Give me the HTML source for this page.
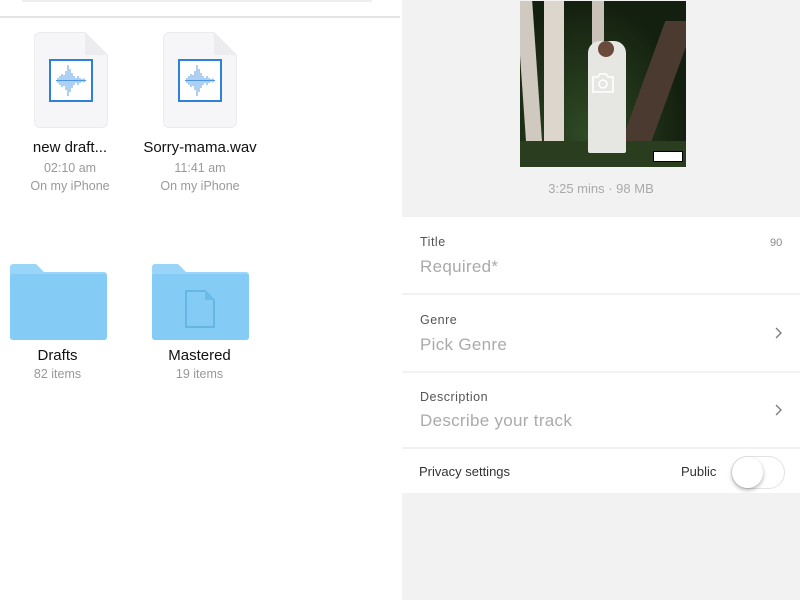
<!DOCTYPE html>
<html><head><meta charset="utf-8"><style>
*{margin:0;padding:0;box-sizing:border-box}
body{width:800px;height:600px;overflow:hidden;background:#fff;font-family:"Liberation Sans",sans-serif;position:relative}
.abs{position:absolute}
.left{left:0;top:0;width:402px;height:600px;background:#fff}
.topbar{left:22px;top:0;width:350px;height:2px;background:#eee}
.div{left:0;top:16px;width:400px;height:2px;background:#e4e4e4}
.doc{width:74px;height:96px;background:#f6f6f8;border:1px solid #ebebed;border-radius:6px}
.name{font-size:15px;color:#111;text-align:center}
.sub{font-size:12.5px;color:#999;text-align:center}
.right{left:402px;top:0;width:398px;height:600px;background:#f2f2f2}
.row{left:402px;width:398px;background:#fff}
.lbl{font-size:12.5px;color:#555;letter-spacing:.5px}
.ph{font-size:17px;color:#aaa;letter-spacing:.3px}
</style></head><body>
<div class="abs left"></div>
<div class="abs topbar"></div>
<div class="abs div"></div>

<div class="abs doc" style="left:34px;top:32px"></div>
<div class="abs" style="left:85px;top:32px;width:23px;height:23px;background:linear-gradient(225deg,#fff 50%,#ececee 50%)"></div>
<svg class="abs" style="left:49px;top:59px" width="44" height="43" viewBox="0 0 44 43"><rect x="1" y="1" width="42" height="41" fill="#fff" stroke="#2f7fdc" stroke-width="2"/><g stroke="#4c96e2" stroke-width="0.9"><path d="M7 21.5h30M9 19v5M11 17v9M13 15v13M15 16v11M17 12v19M19 6v31M21 10v23M23 14v15M25 17v9M27 19v5M29 17v9M31 19v5M33 20v3M35 19.5v4"/></g></svg>
<div class="abs name" style="left:10px;top:139px;width:120px">new draft...</div>
<div class="abs sub" style="left:10px;top:161px;width:120px">02:10 am</div>
<div class="abs sub" style="left:10px;top:179px;width:120px">On my iPhone</div>

<div class="abs doc" style="left:163px;top:32px"></div>
<div class="abs" style="left:214px;top:32px;width:23px;height:23px;background:linear-gradient(225deg,#fff 50%,#ececee 50%)"></div>
<svg class="abs" style="left:178px;top:59px" width="44" height="43" viewBox="0 0 44 43"><rect x="1" y="1" width="42" height="41" fill="#fff" stroke="#2f7fdc" stroke-width="2"/><g stroke="#4c96e2" stroke-width="0.9"><path d="M7 21.5h30M9 19v5M11 17v9M13 15v13M15 16v11M17 12v19M19 6v31M21 10v23M23 14v15M25 17v9M27 19v5M29 17v9M31 19v5M33 20v3M35 19.5v4"/></g></svg>
<div class="abs name" style="left:130px;top:139px;width:140px">Sorry-mama.wav</div>
<div class="abs sub" style="left:130px;top:161px;width:140px">11:41 am</div>
<div class="abs sub" style="left:130px;top:179px;width:140px">On my iPhone</div>

<svg class="abs" style="left:10px;top:264px" width="97" height="76" viewBox="0 0 97 76"><path d="M3 0h23l8 8h60a3 3 0 0 1 3 3v62a3 3 0 0 1-3 3H3a3 3 0 0 1-3-3V3a3 3 0 0 1 3-3z" fill="#98d5f9"/><rect x="0" y="10" width="97" height="66" rx="3" fill="#84cbf5"/></svg>
<div class="abs name" style="left:0;top:347px;width:115px">Drafts</div>
<div class="abs sub" style="left:0;top:367px;width:115px">82 items</div>
<svg class="abs" style="left:152px;top:264px" width="97" height="76" viewBox="0 0 97 76"><path d="M3 0h23l8 8h60a3 3 0 0 1 3 3v62a3 3 0 0 1-3 3H3a3 3 0 0 1-3-3V3a3 3 0 0 1 3-3z" fill="#98d5f9"/><rect x="0" y="10" width="97" height="66" rx="3" fill="#84cbf5"/><path d="M34 27h19l9 9v27H34z" fill="none" stroke="#5cb0e0" stroke-width="1.5"/><path d="M53 27v9h9" fill="#6cbbe8"/></svg>
<div class="abs name" style="left:142px;top:347px;width:115px">Mastered</div>
<div class="abs sub" style="left:142px;top:367px;width:115px">19 items</div>

<div class="abs right"></div>
<div class="abs" style="left:520px;top:1px;width:166px;height:166px;background:#1d2a1c;overflow:hidden">
 <div class="abs" style="left:0;top:0;width:166px;height:166px;background:radial-gradient(ellipse at 40% 80%,#2f4a25,#14200f 70%)"></div>
 <div class="abs" style="left:2px;top:0;width:16px;height:166px;background:#cfc9bf;transform:skewX(4deg)"></div>
 <div class="abs" style="left:24px;top:0;width:20px;height:150px;background:#ddd6cc"></div>
 <div class="abs" style="left:72px;top:0;width:12px;height:60px;background:#c9c2b8"></div>
 <div class="abs" style="left:118px;top:20px;width:30px;height:150px;background:#4a3a30;transform:skewX(-20deg)"></div>
 <div class="abs" style="left:0;top:140px;width:166px;height:26px;background:#2a3d1f"></div>
 <div class="abs" style="left:68px;top:40px;width:38px;height:112px;background:#e6e6e2;border-radius:12px 12px 2px 2px"></div>
 <div class="abs" style="left:78px;top:40px;width:16px;height:16px;background:#6a4a3a;border-radius:50%"></div>
 <div class="abs" style="left:133px;top:150px;width:30px;height:11px;background:#fff;border:1px solid #000"></div>
 <svg class="abs" style="left:71px;top:71px" width="24" height="22" viewBox="0 0 24 22"><path d="M2 5h5l2-3h6l2 3h5v15H2z" fill="none" stroke="#fff" stroke-width="1.6"/><circle cx="12" cy="12" r="4" fill="none" stroke="#fff" stroke-width="1.6"/></svg>
</div>
<div class="abs" style="left:402px;top:181px;width:398px;text-align:center;font-size:13px;color:#aaa">3:25 mins · 98 MB</div>

<div class="abs row" style="top:217px;height:76px"></div>
<div class="abs lbl" style="left:420px;top:235px">Title</div>
<div class="abs" style="left:770px;top:237px;font-size:11px;color:#888">90</div>
<div class="abs ph" style="left:420px;top:257px">Required*</div>

<div class="abs row" style="top:295px;height:76px"></div>
<div class="abs lbl" style="left:420px;top:313px">Genre</div>
<div class="abs ph" style="left:420px;top:335px">Pick Genre</div>
<svg class="abs" style="left:775px;top:327px" width="7" height="12" viewBox="0 0 7 12"><path d="M1 1l5 5-5 5" fill="none" stroke="#777" stroke-width="1.3"/></svg>

<div class="abs row" style="top:373px;height:74px"></div>
<div class="abs lbl" style="left:420px;top:390px">Description</div>
<div class="abs ph" style="left:420px;top:411px">Describe your track</div>
<svg class="abs" style="left:775px;top:404px" width="7" height="12" viewBox="0 0 7 12"><path d="M1 1l5 5-5 5" fill="none" stroke="#777" stroke-width="1.3"/></svg>

<div class="abs row" style="top:449px;height:44px"></div>
<div class="abs" style="left:419px;top:464px;font-size:13px;color:#333">Privacy settings</div>
<div class="abs" style="left:681px;top:464px;font-size:13px;color:#333">Public</div>
<div class="abs" style="left:731px;top:456px;width:54px;height:33px;border:1.5px solid #e3e3e3;border-radius:17px;background:#fff"></div>
<div class="abs" style="left:732px;top:457px;width:31px;height:31px;border-radius:50%;background:#fff;box-shadow:0 2px 4px rgba(0,0,0,.3)"></div>
</body></html>
